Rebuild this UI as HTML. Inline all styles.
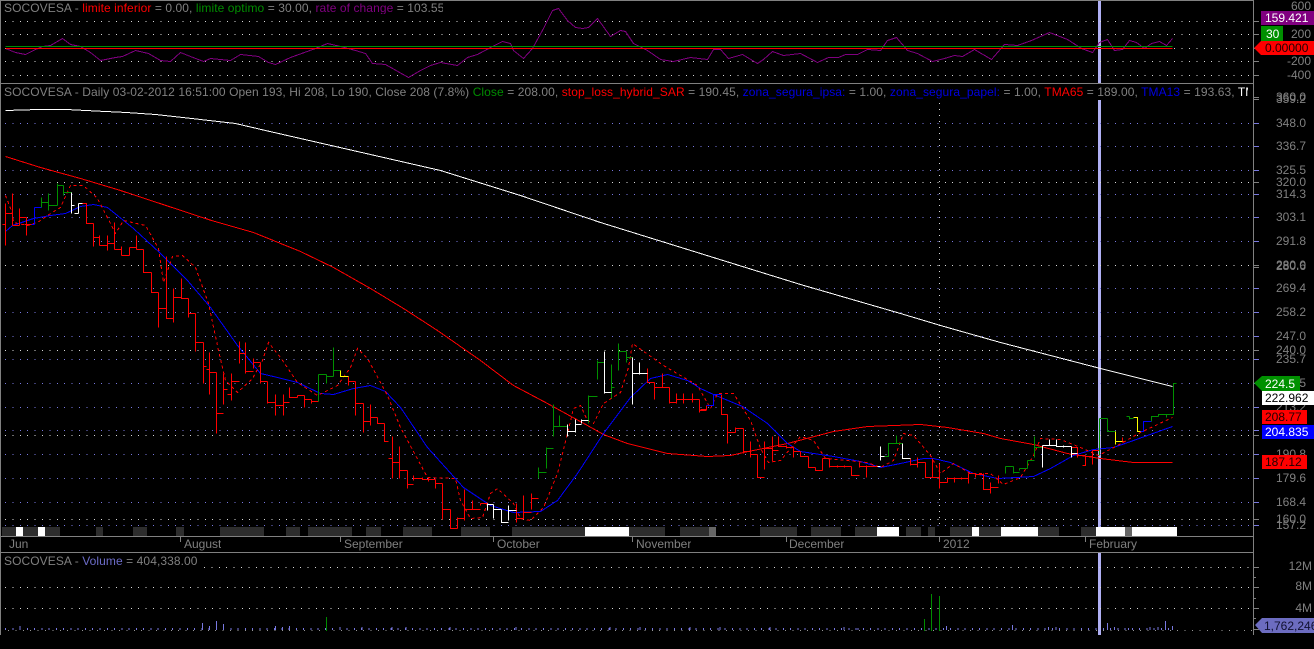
<!DOCTYPE html>
<html>
<head>
<meta charset="utf-8">
<style>
html,body{margin:0;padding:0;background:#000;width:1314px;height:649px;overflow:hidden}
body{position:relative;font-family:"Liberation Sans",sans-serif;font-size:12px;color:#808080}
svg{position:absolute;left:0;top:0}
.h{position:absolute;white-space:nowrap;overflow:hidden;background:#000;line-height:17px;height:16px;letter-spacing:.08px}
.m{line-height:15px;height:15px;background:none;letter-spacing:0}
.r{color:#f00}.g{color:#008c00}.p{color:#800080}.b{color:#0000e0}.v{color:#6c6cc8}.w{color:#fff}
text{font-family:"Liberation Sans",sans-serif;font-size:12px}
</style>
</head>
<body>
<svg width="1314" height="649" viewBox="0 0 1314 649" shape-rendering="crispEdges" fill="none">
<!-- lavender cursor -->
<rect x="1098" y="1" width="3" height="526" fill="#b0b0f4"/>
<rect x="1098" y="553" width="3" height="82" fill="#b0b0f4"/>

<!-- state strip -->
<g fill="#2d2d2d">
<rect x="2" y="527" width="58" height="9"/><rect x="96" y="527" width="7" height="9"/><rect x="133" y="527" width="14" height="9"/><rect x="176" y="527" width="8" height="9"/><rect x="220" y="527" width="44" height="9"/><rect x="286" y="527" width="14" height="9"/><rect x="308" y="527" width="44" height="9"/><rect x="366" y="527" width="15" height="9"/><rect x="403" y="527" width="29" height="9"/><rect x="461" y="527" width="29" height="9"/><rect x="512" y="527" width="73" height="9"/><rect x="629" y="527" width="36" height="9"/><rect x="680" y="527" width="29" height="9"/><rect x="760" y="527" width="37" height="9"/><rect x="811" y="527" width="30" height="9"/><rect x="855" y="527" width="22" height="9"/><rect x="906" y="527" width="15" height="9"/><rect x="928" y="527" width="7" height="9"/><rect x="950" y="527" width="22" height="9"/><rect x="979" y="527" width="22" height="9"/><rect x="1038" y="527" width="21" height="9"/><rect x="1081" y="527" width="15" height="9"/>
</g>
<g fill="#fff">
<rect x="16" y="527" width="7" height="9"/><rect x="38" y="527" width="7" height="9"/><rect x="585" y="527" width="44" height="9"/><rect x="877" y="527" width="22" height="9"/><rect x="972" y="527" width="7" height="9"/><rect x="1001" y="527" width="37" height="9"/><rect x="1096" y="527" width="29" height="9"/><rect x="1132" y="527" width="45" height="9"/>
</g>
<g fill="#666"><rect x="709" y="527" width="7" height="9"/><rect x="1125" y="527" width="7" height="9"/></g>

<!-- dotted grids -->
<path stroke="#d8d8d8" stroke-dasharray="1 6.4" d="M5 21.5H1253M5 34.5H1253M5 48.5H1253M5 61.5H1253M5 75.5H1253M5 182.5H1253M5 265.5H1253M5 350.5H1253M5 435.5H1253M5 519.5H1253M204 567.5H1253M5 587.5H1253M5 608.5H1253"/>
<path stroke="#7878e0" stroke-dasharray="1 6.4" d="M5 123.5H1253M5 146.5H1253M5 170.5H1253M5 194.5H1253M5 217.5H1253M5 241.5H1253M5 288.5H1253M5 312.5H1253M5 336.5H1253M5 359.5H1253M5 383.5H1253M5 407.5H1253M5 430.5H1253M5 454.5H1253M5 478.5H1253M5 502.5H1253M5 525.5H1253"/>
<path stroke="#d8d8d8" stroke-dasharray="1 5" d="M939.5 103V527"/>

<!-- volume -->
<path stroke="#7878e0" stroke-width="2" stroke-dasharray="1 6.27" d="M5 629H1172"/>
<path stroke="#d8d8d8" stroke-dasharray="1 6.4" d="M8 630.5H1253" opacity=".7"/>
<path stroke="#7878e0" d="M20 626V630M202.5 623V630M209.5 626V630M216.5 621V630M223.5 624V630M275.5 626V630M282.5 627V630M289.5 626V630M340 627V630M362 627V630M392 627V630M406 627V630M450 627V630M516 627V630M610 627V630M640 627V630M690 627V630M720 627V630M770 627V630M844 627V630M858 628V630M946.5 626V630M1012.5 625V630M1048.5 627V630M1056 627V630M1107.5 623V630M1114.5 627V630M1128.5 628V630M1150 627V630M1158 627V630M1165.5 621V630M1172.5 626V630"/>
<path stroke="#008c00" d="M326.5 617V631M924.5 619V631M931.5 594V631M939.5 596V631"/>

<g transform="translate(.5 .5)">
<!-- rate of change -->
<path stroke="#800080" d="M5 48L15 52L25 54L35 49L42 46L50 45L62 38L70 44L80 46L90 52L100 60L115 57L122 56L135 50L148 53L160 60L170 61L180 52L190 56L203 61L210 58L230 60L240 54L258 56L268 62L275 64L290 57L315 48L327 43L340 46L355 50L365 53L372 63L385 64L408 77L420 70L430 65L440 62L457 65L467 57L477 54L490 47L502 41L510 43L513 50L523 58L532 48L543 28L552 10L558 8L567 20L575 27L582 28L588 27L597 18L610 36L620 30L625 31L633 43L647 50L660 59L673 61L690 57L707 59L713 49L720 49L728 58L742 54L757 63L763 59L772 51L783 55L800 53L817 62L828 57L838 57L845 54L857 54L867 49L880 50L887 40L896 37L907 50L917 53L932 61L944 58L954 55L962 56L974 49L991 59L1004 44L1017 45L1031 40L1049 32L1067 39L1081 48L1092 52L1099 42L1107 39L1114 50L1122 49L1129 40L1136 42L1144 48L1151 43L1159 41L1166 45L1172 38"/>
<path stroke="#008c00" d="M5 46H1172"/>
<path stroke="#ff0000" stroke-width="1.4" d="M5 48H1172"/>

<!-- TMA200 white -->
<path stroke="#fff" d="M5 110L38 109L66 109L105 111L126 112L155 114L200 119L235 123L265 130L300 138L370 154L440 170L520 195L600 222L700 253L800 284L900 313L940 325L1000 342L1100 368L1172 386"/>
<!-- TMA65 red -->
<path stroke="#ff0000" d="M5 156L40 167L80 178L120 190L211 220L253 232L300 251L333 267L370 288L403 308L437 330L480 360L513 385L547 403L587 425L603 434L627 443L667 453L707 456L730 455L743 452L787 443L833 431L867 426L920 424L947 427L983 433L1000 438L1033 444L1067 453L1100 458L1133 462L1172 462"/>
<!-- TMA13 blue -->
<path stroke="#0000ff" d="M5 231L12 225L33 218L50 215L65 213L80 206L93 204L107 207L133 228L160 253L187 280L210 307L237 345L260 373L277 377L297 382L320 393L333 394L353 388L370 385L385 391L400 407L427 447L463 487L490 505L513 512L540 511L557 500L577 473L603 433L630 397L650 378L667 374L687 380L700 388L713 394L742 406L767 423L787 443L800 451L833 456L860 461L880 467L900 463L923 458L933 458L950 462L973 473L997 478L1033 476L1050 468L1073 455L1093 449L1113 447L1133 440L1172 426"/>
<!-- dashed red -->
<path stroke="#ff0000" stroke-dasharray="3 3" d="M5 195L12 213L13 222L27 225L37 222L50 213L60 207L70 185L83 185L97 198L110 223L115 233L123 220L145 225L158 248L163 282L172 256L182 255L195 267L208 303L218 350L225 380L237 392L252 378L262 360L268 342L280 357L297 382L317 395L337 385L350 367L357 348L367 358L387 395L400 427L427 477L455 478L460 500L470 518L482 517L490 493L497 488L513 503L520 518L530 520L543 507L557 473L567 433L573 408L580 405L587 420L593 423L603 403L620 392L628 367L632 343L663 365L697 385L710 408L717 393L733 393L750 420L760 448L768 462L780 460L800 436L813 440L825 458L867 462L880 467L893 460L903 433L913 435L930 455L940 473L953 463L970 473L990 473L1003 484L1020 477L1033 455L1040 438L1060 439L1080 447L1098 455L1117 445L1140 432L1172 417"/>

<!-- bars -->
<path stroke="#ff0000" d="M5 203V245M2 224H5M5 213H12M12 193V225M12 225H19M19 208V225M19 217H26M26 217V235M24 224H31M82 203H86V223H93M93 223V246M93 237H99M99 235V245M99 245H107M107 235V250M107 243H114M114 222V249M114 249H121M121 246V255M121 255H129M129 247V255M129 247H136M136 235V249M136 249H143M143 249V272H151M151 272V292H158M158 292V327M158 308H166M166 256V318H173M173 288V322M173 297H181M181 278V298H188M188 298V317M188 313H195M195 313V351M195 342H203M203 342V383M203 366H206M209 352V394M206 369H209M209 372H216M216 372V433M216 413H223M223 373V404M223 389H227M231 373V400M227 394H231M231 381H239M239 341V363M239 353H245M245 342V373M245 371H253M253 358V368M253 362H260M260 362V383M260 381H267M267 381V403M267 402H275M275 394V415M275 405H283M283 394V415M283 402H289M289 387V397H297M297 395V397M297 395H304M304 395V407M304 399H311M311 399V403M311 401H318M348 376V385M348 381H355M355 381V415M355 403H363M363 403V432M363 421H370M370 404V425M370 417H377M377 417V423H384M384 423V441H388M388 458H392M392 436V478M392 462H399M399 446V478M399 470H407M407 470V488M407 484H413M413 475V480M413 478H422M422 477V479H428M428 477V481M428 479H435M435 479V488M435 483H442M442 483V519M442 509H450M450 509V528H457M457 517V528M457 518H464M464 489V520M464 509H472M472 500V509H480M480 503V505M480 503H487M516 503V522M516 518H523M523 495V518M523 512H531M531 493V509M531 498H538M647 368V382H654M654 382V399M654 387H662M662 373V387H669M669 387V403M669 402H676M676 393V403M676 399H683M683 393V403M683 399H692M692 393V402M692 399H699M699 399V412M699 410H706M700 409H706V405M721 394V414H727M727 414V443M727 432H735M735 427V432M735 428H743M743 428V453M743 451H750M750 441V457M750 454H757M757 454V477H764M764 441V469M764 448H772M772 436V461M772 450H778M778 436V446H786M786 445V448M786 447H793M793 446V457M793 451H800M800 451V456H808M808 456V467H815M815 467V470H822M822 458V470M822 458H829M829 458V467M829 466H837M837 465V467M837 466H844M844 465V467M844 466H851M851 466V475H859M859 462V467M859 466H866M866 465V477M866 466H873M873 465V466H877M910 458V465M910 464H917M917 457V467M917 462H925M925 462V477H932M932 458V477M932 477H939M939 463V488M939 482H947M947 477V482M947 478H954M954 477V482M954 478H961M961 477V479M961 478H968M968 473V483M968 473H975M975 473V477M975 474H983M983 473V489H990M990 482V493M990 487H998M998 475V483M1071 447H1077V457M1077 455H1085M1082 465H1085V455M1085 456H1092M1092 450V464M1092 450H1099M1122 437V442M1122 441H1125"/>
<path stroke="#0000ff" d="M34 207V224M31 224H34M34 207H41M706 405H713V394H721M1140 431H1143V421H1151"/>
<path stroke="#009000" d="M41 197V207M41 202H48M48 193V210M48 205H57M57 183V205M57 185H63M63 185V195M63 192H71M318 374V401M318 374H326M326 374V383M326 376H333M333 347V376M333 370H340M538 467V478M538 472H546M546 447V468M546 448H553M553 404V436M553 426H559M559 415V426H567M588 395V423M588 396H597M597 360V379M597 362H604M611 364V398M611 387H614M618 343V370M618 351H626M626 351V362M626 357H632M884 456H888V443H896M896 435V443H902M1005 466V473M1005 466H1013M1013 466V473M1013 472H1019M1019 468V470M1019 468H1027M1027 460V468M1027 460H1034M1034 436V457M1034 447H1042M1099 418V455M1099 418H1107M1107 418V431H1115M1126 416H1129M1129 416V419M1129 418H1133M1151 421V416H1158M1158 416V414H1166M1166 414V417M1166 414H1173V383H1176"/>
<path stroke="#fff" d="M71 192V213M71 205H74M78 203V213M74 213H78M78 203H82M487 503V510M487 504H493M493 504V518M493 509H501M501 509V522H508M508 505V520M508 510H516M567 424V436M567 431H575M575 419V432M575 424H581M581 419V423M581 420H588M604 351V393M604 392H611M632 357V404M632 373H639M639 362V374M639 373H647M877 466H880M880 446V460M880 456H884M902 443V458H910M1042 445V467M1042 445H1049M1049 439V445H1056M1056 439V446H1063M1063 445V447M1063 446H1071M1071 446V457M1071 453H1077"/>
<path stroke="#ffff00" d="M340 370V376H348M1115 431V444M1115 441H1122M1133 417H1137V431H1140"/>
</g>

<!-- frame -->
<path stroke="#808080" d="M0 .5H1254M.5 0V635M0 83.5H1254M0 536.5H1254M0 552.5H1254M1253.5 0V635M180.5 537V542M340.5 537V542M493.5 537V542M632.5 537V542M786.5 537V542M939.5 537V542M1085.5 537V542"/>
<path stroke="#808080" d="M1254 21.5H1259M1254 34.5H1259M1254 48.5H1259M1254 61.5H1259M1254 75.5H1259M1254 97.5H1259M1254 99.5H1259M1254 182.5H1259M1254 265.5H1259M1254 267.5H1259M1254 350.5H1259M1254 435.5H1259M1254 519.5H1259M1254 567.5H1259M1254 587.5H1259M1254 608.5H1259M1254 629.5H1259M1254 577.5H1256M1254 598.5H1256M1254 618.5H1256"/>
<path stroke="#7878e0" d="M1254 123.5H1259M1254 146.5H1259M1254 170.5H1259M1254 194.5H1259M1254 217.5H1259M1254 241.5H1259M1254 288.5H1259M1254 312.5H1259M1254 336.5H1259M1254 359.5H1259M1254 383.5H1259M1254 407.5H1259M1254 430.5H1259M1254 454.5H1259M1254 478.5H1259M1254 502.5H1259M1254 525.5H1259"/>
</svg>

<div class="h" style="left:4px;top:1px;width:439px;height:13px;line-height:15px"><span>SOCOVESA - </span><span class="r">limite inferior</span> = 0.00, <span class="g">limite optimo</span> = 30.00, <span class="p">rate of change</span> = 103.55</div>
<div class="h" style="left:1px;top:84px;width:1247px;padding-left:3px;box-sizing:border-box">SOCOVESA - Daily 03-02-2012 16:51:00 Open 193, Hi 208, Lo 190, Close 208 (7.8%) <span class="g">Close</span> = 208.00, <span class="r">stop_loss_hybrid_SAR</span> = 190.45, <span class="b">zona_segura_ipsa:</span> = 1.00, <span class="b">zona_segura_papel:</span> = 1.00, <span class="r">TMA65</span> = 189.00, <span class="b">TMA13</span> = 193.63, <span class="w">TMA200</span></div>
<div class="h" style="left:4px;top:553px;width:196px">SOCOVESA - <span class="v">Volume</span> = 404,338.00</div>

<div class="h m" style="left:9px;top:537px">Jun</div>
<div class="h m" style="left:184px;top:537px">August</div>
<div class="h m" style="left:344px;top:537px">September</div>
<div class="h m" style="left:497px;top:537px">October</div>
<div class="h m" style="left:636px;top:537px">November</div>
<div class="h m" style="left:789px;top:537px">December</div>
<div class="h m" style="left:943px;top:537px">2012</div>
<div class="h m" style="left:1089px;top:537px">February</div>

<svg width="1314" height="649" viewBox="0 0 1314 649">
<g fill="#808080" text-anchor="end">
<text x="1311" y="10">600</text><text x="1311" y="38">200</text><text x="1311" y="65">-200</text><text x="1311" y="79">-400</text>
<text x="1306" y="101">360.0</text><text x="1306" y="103">359.2</text><text x="1306" y="127">348.0</text><text x="1306" y="150">336.7</text><text x="1306" y="174">325.5</text><text x="1306" y="186">320.0</text><text x="1306" y="198">314.3</text><text x="1306" y="221">303.1</text><text x="1306" y="245">291.8</text><text x="1306" y="269">280.0</text><text x="1306" y="270">280.6</text><text x="1306" y="292">269.4</text><text x="1306" y="316">258.2</text><text x="1306" y="340">247.0</text><text x="1306" y="354">240.0</text><text x="1306" y="363">235.7</text><text x="1306" y="387">224.5</text><text x="1306" y="411">213.2</text><text x="1306" y="458">190.8</text><text x="1306" y="482">179.6</text><text x="1306" y="506">168.4</text><text x="1306" y="523">160.0</text><text x="1306" y="529">157.2</text>
<text x="1312" y="570">12M</text><text x="1312" y="590">8M</text><text x="1312" y="612">4M</text>
</g>
<rect x="1261" y="11" width="53" height="14" fill="#800080"/>
<text x="1265" y="22" fill="#fff">159.421</text>
<rect x="1261" y="26" width="22" height="15" fill="#009000"/>
<text x="1266" y="38" fill="#fff">30</text>
<polygon points="1254,48 1261,41 1314,41 1314,55 1261,55" fill="#f00"/>
<text x="1265" y="52" fill="#200000">0.00000</text>

<polygon points="1254,383 1262,376 1300,376 1300,391 1262,391" fill="#009000"/>
<text x="1265" y="388" fill="#fff">224.5</text>
<rect x="1262" y="391" width="52" height="14" fill="#fff"/>
<text x="1265" y="402" fill="#000">222.962</text>
<rect x="1262" y="410" width="45" height="14" fill="#f00"/>
<text x="1265" y="421" fill="#200000">208.77</text>
<rect x="1262" y="425" width="52" height="14" fill="#0000ff"/>
<text x="1265" y="436" fill="#fff">204.835</text>
<rect x="1262" y="455" width="45" height="14" fill="#f00"/>
<text x="1265" y="466" fill="#200000">187.12</text>

<polygon points="1255,625 1262,618 1314,618 1314,633 1262,633" fill="#6c6cc0"/>
<text x="1264" y="630" fill="#101030">1,762,246</text>
</svg>
</body>
</html>
